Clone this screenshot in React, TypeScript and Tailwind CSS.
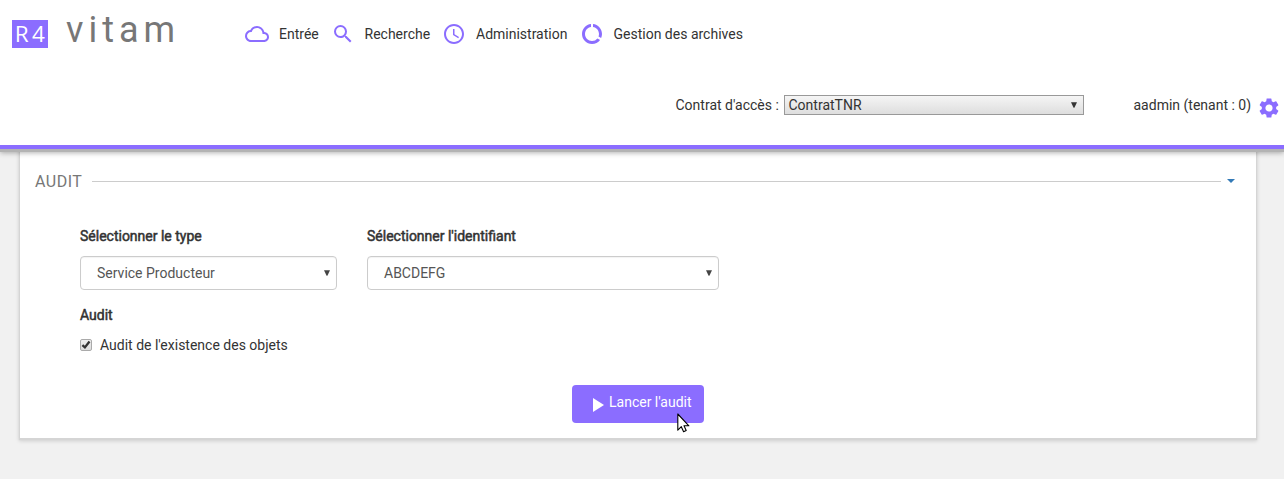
import type { ReactNode } from "react";
import { MdCloudQueue, MdSearch, MdAccessTime, MdDataUsage, MdSettings, MdPlayArrow } from "react-icons/md";

function NavItem({ icon, label, className }: { icon: ReactNode; label: string; className: string }) {
  return (
    <a className={`flex shrink-0 items-center whitespace-nowrap ${className}`}>
      <span className="w-6 shrink-0 text-[24px] text-[#8b6dff]">{icon}</span>
      <span className="ml-[10px]">{label}</span>
    </a>
  );
}

function Arrow({ className }: { className: string }) {
  return (
    <svg className={className} width="6" height="6" viewBox="0 0 6 6" fill="currentColor">
      <path d="M0 .3h6L3.4 5.7h-.8z" />
    </svg>
  );
}

function Field({ label, value, className }: { label: string; value: string; className: string }) {
  return (
    <div className={className}>
      <div className="h-5 font-normal leading-5 [-webkit-text-stroke:0.5px_#333]">{label}</div>
      <div className="mt-[10px] flex h-[34px] items-center justify-between rounded border border-[#ccc] pr-[6px] pl-4 text-[#555] shadow-[inset_0_1px_1px_rgba(0,0,0,0.05)]">
        <span>{value}</span>
        <Arrow className="text-[#444]" />
      </div>
    </div>
  );
}

export default function App() {
  return (
    <div className="h-[479px] w-[1284px] overflow-hidden bg-[#f1f1f1] font-['Roboto',sans-serif] text-[14px] leading-5 text-[#333]">
      <header className="relative z-10 h-[149px] border-b-4 border-[#8b6dff] bg-white shadow-[0_3px_0_#b3b3b3,0_4px_5px_rgba(0,0,0,0.3)]">
        <div className="flex h-[68px] items-start">
          <div className="mt-5 ml-[12px] flex h-7 w-9 shrink-0 items-center justify-center bg-[#8b6dff] pl-[3px] font-['Open_Sans',sans-serif] text-[22.5px] leading-7 tracking-[3.5px] text-white">
            R4
          </div>
          <div className="mt-[10px] ml-[18px] w-[179px] shrink-0 text-[36px] leading-10 tracking-[5px] text-[#777]">vitam</div>
          <nav className="flex h-[68px] items-center">
            <NavItem icon={<MdCloudQueue />} label="Entrée" className="w-[85.5px]" />
            <NavItem icon={<MdSearch />} label="Recherche" className="w-[111.5px]" />
            <NavItem icon={<MdAccessTime />} label="Administration" className="w-[137.5px]" />
            <NavItem icon={<MdDataUsage />} label="Gestion des archives" className="w-[170px]" />
          </nav>
        </div>
        <div className="mt-[27px] flex h-5 items-center">
          <span className="ml-[675.5px] w-[108.5px] shrink-0">Contrat d'accès :</span>
          <div className="flex h-5 w-[300px] shrink-0 items-center justify-between border border-[#999] bg-linear-to-b from-[#f5f5f5] to-[#dedede] pr-[6px] pl-[3.5px]">
            <span>ContratTNR</span>
            <Arrow className="text-[#333]" />
          </div>
          <span className="ml-[49.5px] w-[123px] shrink-0">aadmin (tenant : 0)</span>
          <MdSettings className="mt-[6px] shrink-0 text-[24px] text-[#8b6dff]" />
        </div>
      </header>

      <main className="ml-5 h-[289px] w-[1236px] bg-white pt-[22px] shadow-[0_1px_1px_1px_#d5d5d5,0_2px_4px_1px_rgba(0,0,0,0.15)]">
        <div className="flex h-5 items-center pl-[15px]">
          <span className="mt-[2px] w-[57px] shrink-0 text-[16px] tracking-[0.5px] text-[#777]">AUDIT</span>
          <div className="h-px w-[1129px] bg-[#ccc]" />
          <svg className="ml-[6px]" width="8" height="4" viewBox="0 0 8 4">
            <path d="M0 0h8L4 4z" fill="#337ab7" />
          </svg>
        </div>

        <div className="mt-[35px] flex gap-[30px] pl-[60px]">
          <Field label="Sélectionner le type" value="Service Producteur" className="w-[257px]" />
          <Field label="Sélectionner l'identifiant" value="ABCDEFG" className="w-[352px]" />
        </div>

        <div className="mt-[15px] pl-[60px]">
          <div className="h-5 [-webkit-text-stroke:0.5px_#333]">Audit</div>
          <div className="mt-[10px] flex h-5 items-center">
            <span className="flex h-3 w-3 items-center justify-center rounded-[2px] border border-[#aaa] bg-linear-to-b from-[#eee] to-[#ddd]">
              <svg width="10" height="10" viewBox="0 0 10 10" fill="none" stroke="#333" strokeWidth="2.3">
                <path d="M1.4 5.1 3.9 7.4 8.5 1.5" />
              </svg>
            </span>
            <span className="ml-2">Audit de l'existence des objets</span>
          </div>
        </div>

        <div className="mt-[30px] flex pl-[552px]">
          <button className="relative flex h-[38px] w-[132px] items-start rounded bg-[#8b6dff] text-white">
            <MdPlayArrow className="mt-2 ml-[12.5px] shrink-0 text-[24px]" />
            <span className="mt-[7px] ml-[0.5px] whitespace-nowrap">Lancer l'audit</span>
            <svg className="absolute top-[28px] left-[105px]" width="13" height="20" viewBox="0 0 13 20">
              <path d="M.8 1v16.2l3.5-3.5 2.3 5.1 2.6-1.2-2.2-4.8h4.9z" fill="#fff" stroke="#000" strokeWidth="1.1" strokeLinejoin="round" />
            </svg>
          </button>
        </div>
      </main>
    </div>
  );
}
